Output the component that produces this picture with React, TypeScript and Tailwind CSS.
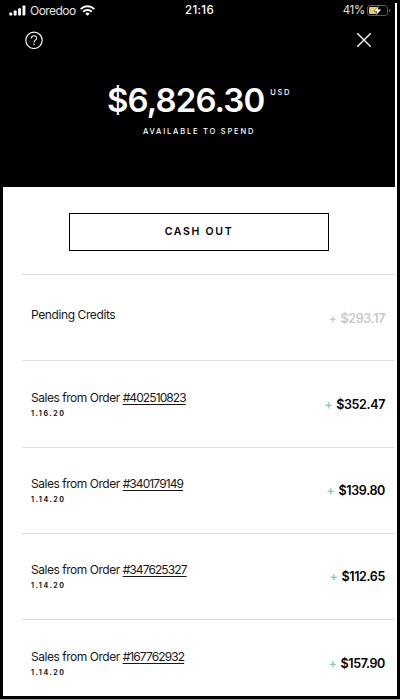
import { clsx } from 'clsx';

type Sale = {
  order: string;
  date: string;
  amount: string;
};

const sales: Sale[] = [
  { order: '#402510823', date: '1.16.20', amount: '$352.47' },
  { order: '#340179149', date: '1.14.20', amount: '$139.80' },
  { order: '#347625327', date: '1.14.20', amount: '$112.65' },
  { order: '#167762932', date: '1.14.20', amount: '$157.90' },
];

function SignalIcon() {
  return (
    <svg className="h-[11px] w-[17px]" viewBox="0 0 17 11" fill="currentColor" aria-hidden="true">
      <rect x="0.3" y="7.4" width="2.9" height="3.1" rx="0.7" />
      <rect x="4.7" y="5.6" width="2.9" height="4.9" rx="0.7" />
      <rect x="9.1" y="3.2" width="2.9" height="7.3" rx="0.7" />
      <rect x="13.5" y="0.5" width="2.9" height="10" rx="0.7" />
    </svg>
  );
}

function WifiIcon() {
  return (
    <svg className="h-[11px] w-[15px]" viewBox="0 0 15 11" fill="none" stroke="currentColor" strokeWidth="2" aria-hidden="true">
      <path d="M0.7 4.1a9.7 9.7 0 0 1 13.6 0" />
      <path d="M3.2 6.8a6.1 6.1 0 0 1 8.6 0" />
      <path d="M7.5 10.8 5.3 8.7a3.1 3.1 0 0 1 4.4 0z" fill="currentColor" stroke="none" />
    </svg>
  );
}

function BatteryIcon() {
  return (
    <svg className="h-[11px] w-[23px]" viewBox="0 0 23 11" fill="none" aria-hidden="true">
      <rect x="0.5" y="0.5" width="20" height="10" rx="2.6" stroke="#5c5c5c" />
      <path d="M3 2h7.5L7 5.8v1h2.5L8.7 9H3a1 1 0 0 1-1-1V3a1 1 0 0 1 1-1z" fill="#f2cb57" />
      <path d="M22 4v3c.7-.3 1-.8 1-1.5S22.7 4.3 22 4z" fill="#8a8a8a" />
      <path d="M11.8 1 6.8 6.3h3.3L9 10.2l5.3-5.7h-3.5z" fill="#fff" />
    </svg>
  );
}

function StatusBar() {
  return (
    <div className="grid h-[21px] grid-cols-3 items-center pl-[6px] pr-[5px] text-[11.5px]">
      <div className="flex items-center">
        <SignalIcon />
        <span className="ml-[4px] mr-[4px] text-[12px] tracking-[-0.55px] text-[#e4e4e4]">Ooredoo</span>
        <WifiIcon />
      </div>
      <span className="pt-px text-center font-medium tracking-[0.3px]">21:16</span>
      <div className="flex items-center justify-end gap-[2px]">
        <span className="pt-px tracking-[-0.3px] text-[#e4e4e4]">41%</span>
        <BatteryIcon />
      </div>
    </div>
  );
}

function Header() {
  return (
    <header className="mr-[2px] h-[187px] bg-black text-white">
      <StatusBar />
      <div className="flex h-[38px] items-center justify-between pl-[22px] pr-[23px]">
        <button aria-label="Help">
          <svg className="size-[18px]" viewBox="0 0 18 18" fill="none" stroke="currentColor" strokeWidth="1.1">
            <circle cx="9" cy="9.3" r="8.2" />
            <path d="M6.4 7.5c0-3.7 5.2-3.5 5.2-.3 0 2-2.6 1.8-2.6 4.3" />
            <path d="M9 12.5V14" />
          </svg>
        </button>
        <button aria-label="Close">
          <svg className="size-4" viewBox="0 0 16 16" fill="none" stroke="currentColor" strokeWidth="1.3">
            <path d="m1.2 1.2 13.6 13.6M14.8 1.2 1.2 14.8" />
          </svg>
        </button>
      </div>
      <div className="flex items-start pl-[104px] pt-[21px]">
        <span className="text-[33px] font-semibold leading-10 tracking-[-0.9px]">$6,826.30</span>
        <span className="ml-[6px] mt-[8px] text-[7.5px] font-medium leading-[10px] tracking-[1.6px]">USD</span>
      </div>
      <p className="pt-[7px] text-center text-[7.5px] font-medium leading-[10px] tracking-[1.8px]">
        AVAILABLE TO SPEND
      </p>
    </header>
  );
}

function Amount({ value, pending = false }: { value: string; pending?: boolean }) {
  return (
    <span
      className={clsx(
        'mt-[35.5px] text-[12.5px] font-semibold leading-4 tracking-[-0.35px]',
        pending ? 'text-[#c9c9c9]' : 'text-black',
      )}
    >
      <span className={clsx('mr-[4px]', !pending && 'text-[#86ceb0]')}>+</span>
      {value}
    </span>
  );
}

function SaleRow({ order, date, amount }: Sale) {
  return (
    <li className="flex h-[86.3px] justify-between border-t border-[#e0e0e0] pl-[9px] pr-[10px]">
      <div className="pt-[28.5px]">
        <p className="text-[12px] leading-4 tracking-[-0.47px]">
          Sales from Order{' '}
          <a className="tracking-[-0.9px] underline underline-offset-2">{order}</a>
        </p>
        <p className="mt-[3px] text-[7px] font-bold leading-[10px] tracking-[1.55px]">{date}</p>
      </div>
      <Amount value={amount} />
    </li>
  );
}

export default function App() {
  return (
    <div className="h-[700px] w-[400px] overflow-hidden border-b border-[#a0a0a0] bg-black font-['Inter',sans-serif] text-[#181818]">
      <div className="h-[696px] overflow-hidden px-[3px]">
        <div className="h-full bg-linear-to-b from-black from-[3px] to-white to-[3px]">
          <Header />
          <main className="pt-[26px]">
            <button className="ml-[66px] block h-[38px] w-[260px] border border-black pt-px text-[10.5px] font-semibold leading-none tracking-[1.7px] text-black">
              CASH OUT
            </button>
            <ul className="ml-[19px] mr-[2px] mt-[23px]">
              <li className="flex h-[86.3px] justify-between border-t border-[#e0e0e0] pl-[9px] pr-[10px]">
                <p className="pt-[32px] text-[12px] leading-4 tracking-[-0.4px]">Pending Credits</p>
                <Amount value="$293.17" pending />
              </li>
              {sales.map((sale) => (
                <SaleRow key={sale.order} {...sale} />
              ))}
            </ul>
          </main>
        </div>
      </div>
    </div>
  );
}
